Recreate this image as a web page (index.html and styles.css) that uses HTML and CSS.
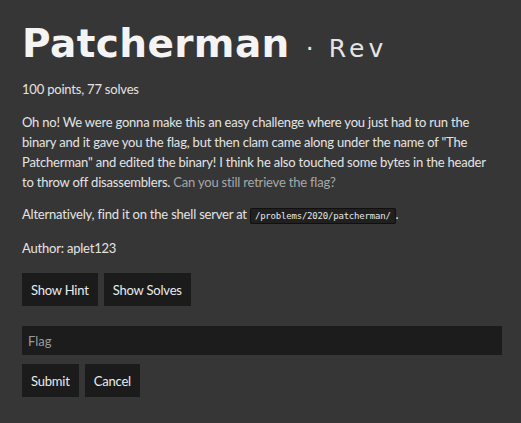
FILE: index.html
```html
<!DOCTYPE html>
<html>
<head>
<meta charset="utf-8">
<link rel="stylesheet" href="styles.css">
</head>
<body>
<main class="problem">
  <h1 class="title"><span class="name">Patcherman</span><span class="sep">·</span><span class="cat">Rev</span></h1>
  <p class="meta">100 points, 77 solves</p>
  <p class="desc">Oh no! We were gonna make this an easy challenge where you just had to run the binary and it gave you the flag, but then clam came along under the name of "The Patcherman" and edited the binary! I think he also touched some bytes in the header to throw off disassemblers. <span class="muted">Can you still retrieve the flag?</span></p>
  <p class="desc">Alternatively, find it on the shell server at <code class="code">/problems/2020/patcherman/</code>.</p>
  <p class="desc">Author: aplet123</p>
  <div class="actions">
    <button class="btn">Show Hint</button>
    <button class="btn">Show Solves</button>
  </div>
  <input class="flag" type="text" placeholder="Flag">
  <div class="actions">
    <button class="btn">Submit</button>
    <button class="btn">Cancel</button>
  </div>
</main>
</body>
</html>
```
FILE: styles.css
```css
html, body {
  margin: 0;
  background: #363636;
}
body {
  font-family: Lato, "Noto Sans", sans-serif;
  color: #e4e4e4;
  font-size: 13px;
  letter-spacing: -0.2px;
}
.problem {
  padding: 20px 19px 0 22px;
}
.title {
  margin: 0;
  display: flex;
  align-items: baseline;
  line-height: 48px;
  font-weight: normal;
  letter-spacing: 0;
}
.name {
  font-family: "DejaVu Sans", sans-serif;
  font-weight: bold;
  font-size: 39px;
  letter-spacing: 0.4px;
  color: #f4f4f4;
}
.sep {
  font-family: "DejaVu Sans", sans-serif;
  font-size: 25px;
  margin: 0 15px 0 16px;
  color: #e4e4e4;
}
.cat {
  font-family: "DejaVu Sans", sans-serif;
  font-size: 25px;
  letter-spacing: 4px;
  color: #e4e4e4;
}
.meta {
  margin: 6px 0 0;
  line-height: 20px;
}
.desc {
  margin: 12px 0 0;
  line-height: 20px;
  max-width: 474px;
}
.meta + .desc {
  margin-top: 13px;
}
.muted {
  color: #a8a8a8;
}
.code {
  font-family: "DejaVu Sans Mono", monospace;
  font-size: 9px;
  letter-spacing: -0.2px;
  background: #202020;
  border: 1px solid #101010;
  border-radius: 2px;
  padding: 2px 4px;
  color: #e8e8e8;
}
.actions {
  display: flex;
  gap: 6px;
  margin-top: 15px;
}
.btn {
  font-family: Lato, "Noto Sans", sans-serif;
  font-size: 13px;
  letter-spacing: -0.2px;
  color: #ececec;
  background: #1b1b1b;
  border: none;
  height: 33px;
  padding: 0 9px;
}
.flag {
  display: block;
  box-sizing: border-box;
  width: 100%;
  height: 29px;
  margin-top: 20px;
  background: #1c1c1c;
  border: none;
  padding: 0 6px;
  font-family: Lato, "Noto Sans", sans-serif;
  font-size: 13px;
  color: #e4e4e4;
}
.flag::placeholder {
  color: #9a9a9a;
}
.flag + .actions {
  margin-top: 9px;
}
```
